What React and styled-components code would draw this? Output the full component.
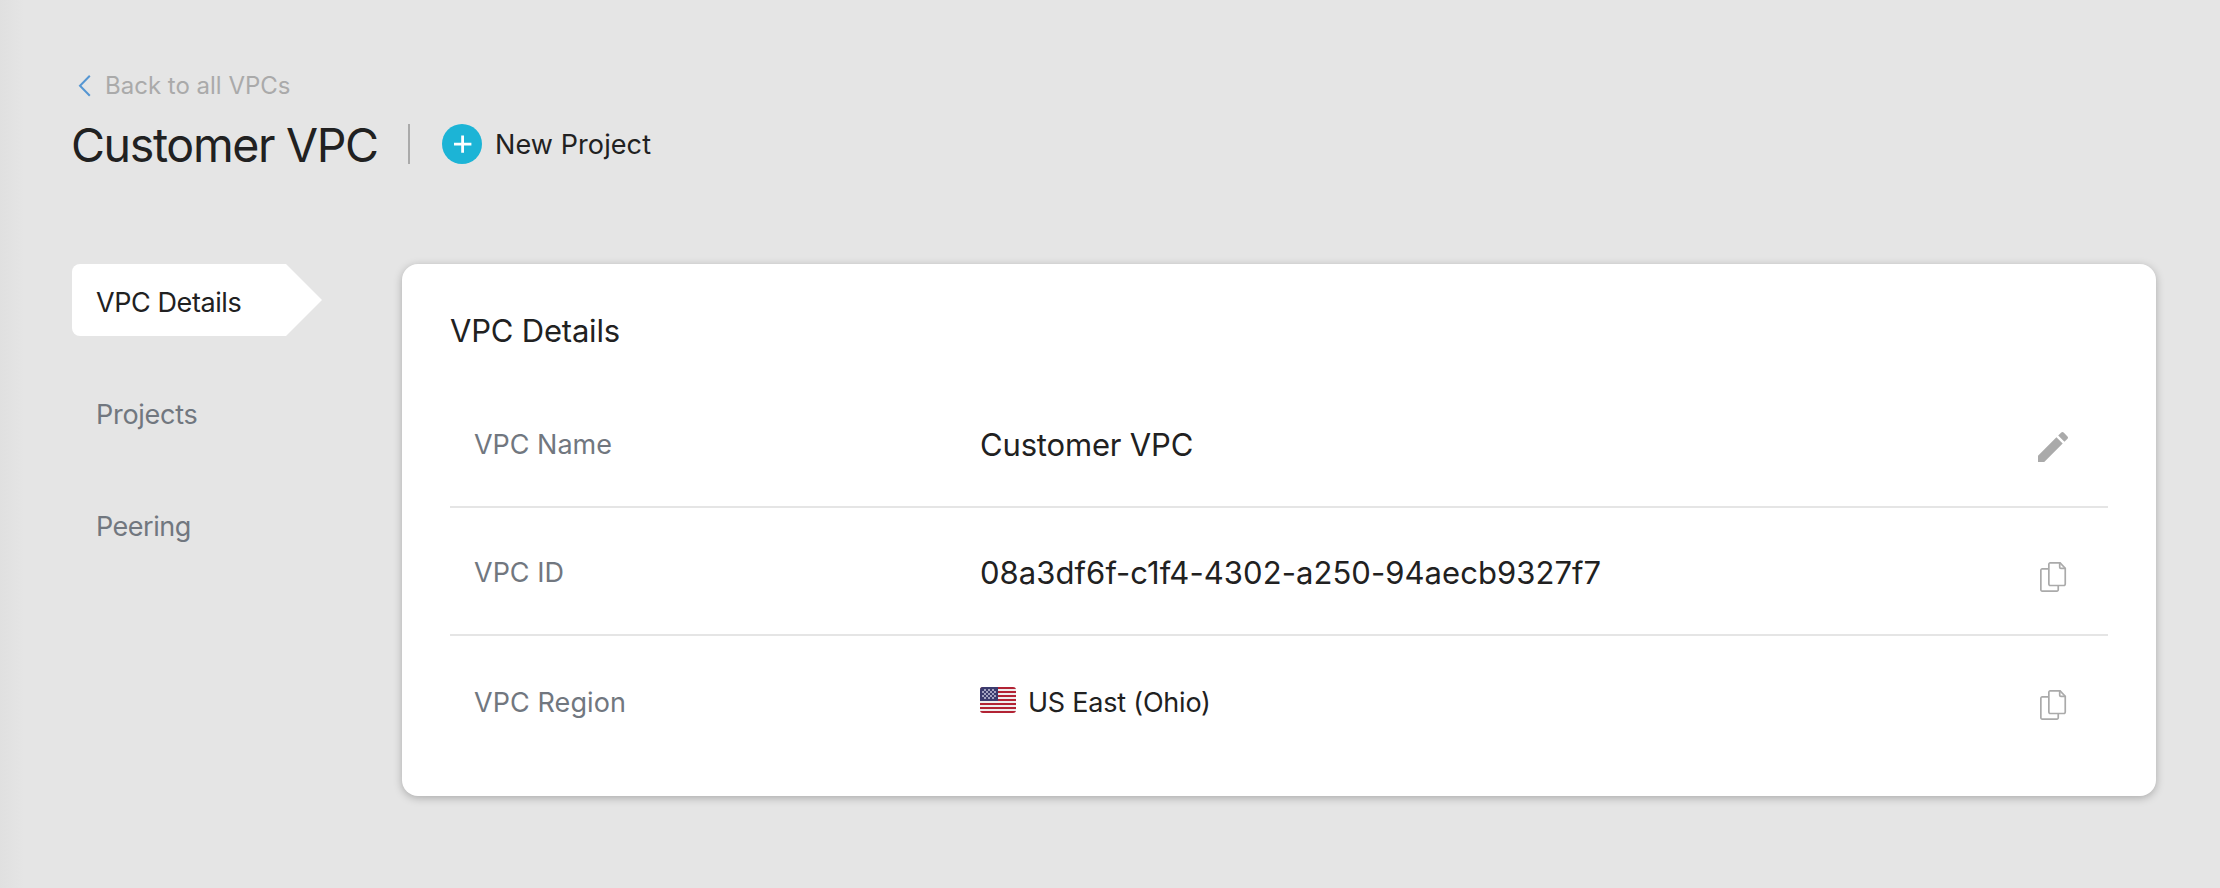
import React from "react";
import styled, { createGlobalStyle } from "styled-components";

const GlobalStyle = createGlobalStyle`
  * { box-sizing: border-box; }
  body {
    margin: 0;
    background: #e5e5e5;
    color: #212121;
    font-family: Inter, "Liberation Sans", sans-serif;
    font-size: 27px;
  }
`;

const Page = styled.main`
  min-height: 888px;
  padding: 71px 64px 92px 72px;
  background: linear-gradient(to right, #e0e0e0, #e5e5e5 24px);
`;

const BackLink = styled.a`
  display: flex;
  align-items: center;
  width: max-content;
  height: 30px;
  padding-left: 6px;
  gap: 13px;
  color: #aaaaaa;
  font-size: 24px;
  line-height: 30px;
`;

const Header = styled.header`
  display: flex;
  align-items: center;
  height: 60px;
  margin: 13px 0 90px;
`;

const Title = styled.h1`
  width: 337px;
  margin: 0 0 0 -1px;
  padding-top: 1px;
  font-size: 46.5px;
  font-weight: 400;
  line-height: 60px;
  letter-spacing: -1.35px;
  white-space: nowrap;
`;

const Divider = styled.span`
  width: 2px;
  height: 40px;
  margin-right: 32px;
  background: #aaaaaa;
`;

const NewProject = styled.button`
  display: flex;
  align-items: center;
  gap: 13px;
  padding: 0;
  border: 0;
  background: none;
  color: inherit;
  font: inherit;
  line-height: 40px;
  letter-spacing: 0.1px;
`;

const ButtonText = styled.span`
  padding-top: 2px;
`;

const Content = styled.div`
  display: flex;
  align-items: flex-start;
`;

const Nav = styled.nav`
  display: flex;
  flex-direction: column;
  gap: 40px;
  width: 330px;
`;

const NavItem = styled.a`
  display: flex;
  width: 214px;
  height: 72px;
  padding: 5px 0 0 24px;
  border-radius: 8px 0 0 8px;
  line-height: 68px;
  letter-spacing: ${(p) => p.$spacing}px;
  color: ${(p) => (p.$active ? "#212121" : "#71777f")};
  background: ${(p) => (p.$active ? "#ffffff" : "transparent")};
`;

const ActiveTab = styled.div`
  display: flex;

  &::after {
    content: "";
    border: solid transparent;
    border-width: 36px 0 36px 36px;
    border-left-color: #ffffff;
  }
`;

const Card = styled.section`
  flex: 1;
  height: 532px;
  padding: 47px 48px 28px;
  border-radius: 16px;
  background: #ffffff;
  box-shadow: 0 2px 8px rgba(0, 0, 0, 0.26);
`;

const CardTitle = styled.h2`
  margin: 0 0 29px;
  font-size: 31px;
  font-weight: 400;
  line-height: 40px;
  letter-spacing: -0.2px;
`;

const Row = styled.div`
  display: grid;
  grid-template-columns: 506px 1fr 78px;
  align-items: center;
  height: 128px;
  padding: 4px 0 0 24px;
  border-bottom: 2px solid #e5e5e5;

  &:last-child {
    height: 132px;
    padding-top: 2px;
    border-bottom: 0;
  }
`;

const Label = styled.span`
  color: #71777f;
  line-height: 40px;
  letter-spacing: ${(p) => p.$spacing}px;
`;

const Value = styled.span`
  font-size: 31px;
  line-height: 40px;
  letter-spacing: ${(p) => p.$spacing || 0}px;
`;

const Region = styled.span`
  display: flex;
  align-items: center;
  gap: 12px;
  line-height: 40px;
  letter-spacing: -0.22px;

  svg { margin-bottom: 6px; }
`;

const IconButton = styled.button`
  display: flex;
  padding: ${(p) => p.$pad};
  border: 0;
  background: none;
  color: #aaaaaa;
`;

const BackIcon = () => (
  <svg width="14" height="24" viewBox="0 0 14 24" fill="none" stroke="#5596d2" strokeWidth="2">
    <path d="M11.8 1.7 2 11.7l9.8 10" />
  </svg>
);

const PlusIcon = () => (
  <svg width="40" height="40" viewBox="0 0 40 40">
    <circle cx="20" cy="20" r="20" fill="#1cb4d6" />
    <path d="M12 20.2h17.4M20.6 11.4v17.4" stroke="#fff" strokeWidth="2.8" />
  </svg>
);

const PencilIcon = () => (
  <svg width="40" height="40" viewBox="0 0 24 24" fill="currentColor">
    <path d="M3 17.25V21h3.75L17.81 9.94l-3.75-3.75L3 17.25zM20.71 7.04a.996.996 0 0 0 0-1.41l-2.34-2.34a.996.996 0 0 0-1.41 0l-1.83 1.83 3.75 3.75 1.83-1.83z" />
  </svg>
);

const CopyIcon = () => (
  <svg width="28" height="30" viewBox="0 0 28 30" fill="none" stroke="currentColor" strokeWidth="1.7">
    <path d="M8 6.85H2.3A1.4 1.4 0 0 0 .85 8.3v19.4a1.4 1.4 0 0 0 1.45 1.45h14.5a1.4 1.4 0 0 0 1.45-1.45V24" />
    <path d="M10.3.85h9.8l5.15 5.4v15.8a1.4 1.4 0 0 1-1.45 1.45H10.3a1.4 1.4 0 0 1-1.45-1.45V2.3A1.4 1.4 0 0 1 10.3.85z" />
    <path d="M19.7.85v4.4a1.2 1.2 0 0 0 1.2 1.2h4.4" />
  </svg>
);

const starRows = [0, 1, 2, 3, 4].flatMap((row) =>
  (row % 2 ? [2, 6, 10, 14] : [4, 8, 12]).map((x) => [x, 2 + row * 2])
);

const FlagIcon = () => (
  <svg width="36" height="26" viewBox="0 0 36 26">
    <clipPath id="flag">
      <rect width="36" height="26" rx="3" />
    </clipPath>
    <g clipPath="url(#flag)">
      <rect width="36" height="26" fill="#eeeeee" />
      {[0, 4, 8, 12, 16, 20, 24].map((y) => (
        <rect key={y} y={y} width="36" height="2" fill="#b22334" />
      ))}
      <rect width="18" height="14" fill="#3c3b6e" />
      {starRows.map(([x, y]) => (
        <rect key={`${x}-${y}`} x={x} y={y} width="2" height="2" fill="#a3a2c0" />
      ))}
    </g>
  </svg>
);

export default function App() {
  return (
    <>
      <GlobalStyle />
      <Page>
        <BackLink>
          <BackIcon />
          Back to all VPCs
        </BackLink>
        <Header>
          <Title>Customer VPC</Title>
          <Divider />
          <NewProject>
            <PlusIcon />
            <ButtonText>New Project</ButtonText>
          </NewProject>
        </Header>
        <Content>
          <Nav>
            <ActiveTab>
              <NavItem $active $spacing={-0.42}>VPC Details</NavItem>
            </ActiveTab>
            <NavItem $spacing={-0.27}>Projects</NavItem>
            <NavItem $spacing={-0.5}>Peering</NavItem>
          </Nav>
          <Card>
            <CardTitle>VPC Details</CardTitle>
            <Row>
              <Label $spacing={-0.02}>VPC Name</Label>
              <Value $spacing={-0.17}>Customer VPC</Value>
              <IconButton $pad="4px 0 0 3px" aria-label="Edit"><PencilIcon /></IconButton>
            </Row>
            <Row>
              <Label $spacing={0}>VPC ID</Label>
              <Value $spacing={0.06}>08a3df6f-c1f4-4302-a250-94aecb9327f7</Value>
              <IconButton $pad="8px 0 0 10px" aria-label="Copy ID"><CopyIcon /></IconButton>
            </Row>
            <Row>
              <Label $spacing={0.09}>VPC Region</Label>
              <Region>
                <FlagIcon />
                US East (Ohio)
              </Region>
              <IconButton $pad="4px 0 0 10px" aria-label="Copy region"><CopyIcon /></IconButton>
            </Row>
          </Card>
        </Content>
      </Page>
    </>
  );
}
